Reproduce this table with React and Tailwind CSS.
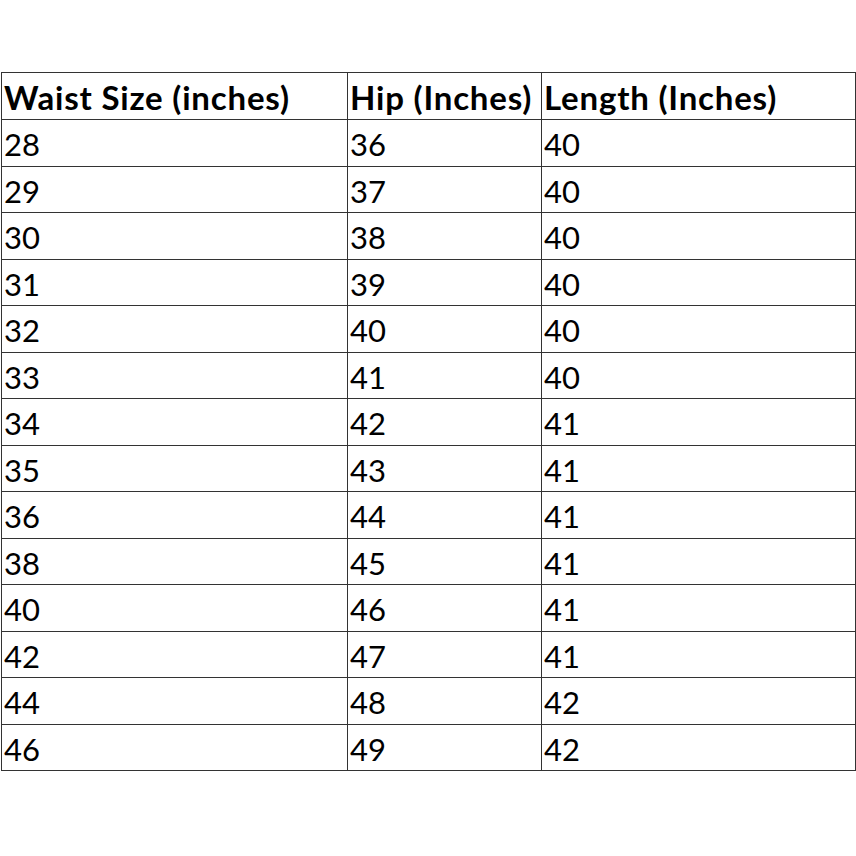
const rows = [
  ["28", "36", "40"],
  ["29", "37", "40"],
  ["30", "38", "40"],
  ["31", "39", "40"],
  ["32", "40", "40"],
  ["33", "41", "40"],
  ["34", "42", "41"],
  ["35", "43", "41"],
  ["36", "44", "41"],
  ["38", "45", "41"],
  ["40", "46", "41"],
  ["42", "47", "41"],
  ["44", "48", "42"],
  ["46", "49", "42"],
];

export default function App() {
  return (
    <div className="w-[856px] h-[856px] bg-white pt-[72px] pl-[1px] font-['Lato','Liberation_Sans',sans-serif] text-black">
      <table className="border-collapse w-[854px] table-fixed">
        <colgroup>
          <col className="w-[346px]" />
          <col className="w-[194px]" />
          <col className="w-[314px]" />
        </colgroup>
        <thead>
          <tr className="h-[47px]">
            <th className="border border-[#333] text-left font-bold text-[33px] tracking-[0.8px] leading-none px-[2px] pt-[3px] align-middle whitespace-nowrap">Waist Size (inches)</th>
            <th className="border border-[#333] text-left font-bold text-[33px] tracking-[0.8px] leading-none px-[2px] pt-[3px] align-middle whitespace-nowrap">Hip (Inches)</th>
            <th className="border border-[#333] border-l-[#777] text-left font-bold text-[33px] tracking-[0.8px] leading-none px-[2px] pt-[3px] align-middle whitespace-nowrap">Length (Inches)</th>
          </tr>
        </thead>
        <tbody>
          {rows.map((r, i) => (
            <tr key={i} className="h-[46.5px]">
              <td className="border border-[#333] text-[31px] leading-none px-[2px] pt-[4px] align-middle">{r[0]}</td>
              <td className="border border-[#333] text-[31px] leading-none px-[2px] pt-[4px] align-middle">{r[1]}</td>
              <td className="border border-[#333] border-l-[#777] text-[31px] leading-none px-[2px] pt-[4px] align-middle">{r[2]}</td>
            </tr>
          ))}
        </tbody>
      </table>
    </div>
  );
}
